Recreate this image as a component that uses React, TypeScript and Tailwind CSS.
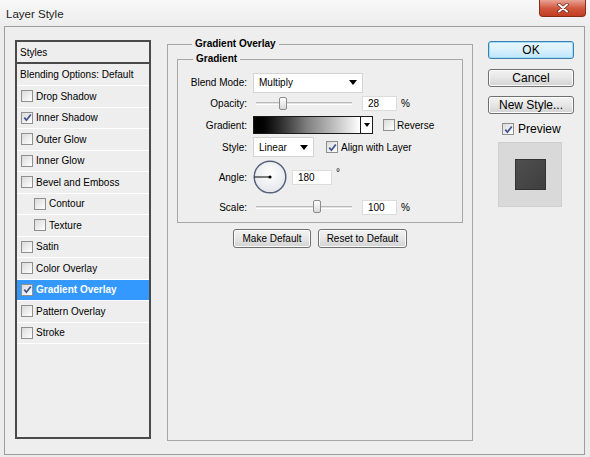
import React from 'react'

const STYLE_ROWS = [
  { label: 'Drop Shadow', checked: false, indent: false },
  { label: 'Inner Shadow', checked: true, indent: false },
  { label: 'Outer Glow', checked: false, indent: false },
  { label: 'Inner Glow', checked: false, indent: false },
  { label: 'Bevel and Emboss', checked: false, indent: false },
  { label: 'Contour', checked: false, indent: true },
  { label: 'Texture', checked: false, indent: true },
  { label: 'Satin', checked: false, indent: false },
  { label: 'Color Overlay', checked: false, indent: false },
  { label: 'Gradient Overlay', checked: true, indent: false, selected: true },
  { label: 'Pattern Overlay', checked: false, indent: false },
  { label: 'Stroke', checked: false, indent: false },
]

const Checkbox = ({ checked }: { checked?: boolean }) => (
  <span className="w-[12px] h-[12px] shrink-0 border border-[#8e8f8f] bg-linear-to-br from-[#dadada] to-white flex items-center justify-center">
    {checked && (
      <svg width="9" height="9" viewBox="0 0 9 9">
        <path d="M1.3 4.6 L3.4 7.2 L7.8 1.4" stroke="#3d528f" strokeWidth="1.7" fill="none" />
      </svg>
    )}
  </span>
)

const Arrow = () => (
  <svg width="8" height="5" viewBox="0 0 8 5">
    <path d="M0 0 H8 L4 5 Z" fill="#000" />
  </svg>
)

const Select = ({ value, width }: { value: string; width: string }) => (
  <div className={`${width} h-[20px] bg-white border border-[#d4d4d4] flex items-center justify-between pl-[5px] pr-[5px]`}>
    <span>{value}</span>
    <Arrow />
  </div>
)

const Slider = ({ thumb }: { thumb: string }) => (
  <div className="relative w-[96px] h-[14px] ml-[3px] flex items-center">
    <div className="w-full h-[3px] border-t border-[#b9b9b9] border-b border-b-white bg-[#e3e3e3]" />
    <div
      className={`absolute top-0 ${thumb} w-[8px] h-[13px] rounded-[2px] border border-[#8c8c8c] bg-linear-to-b from-white to-[#d9d9d9]`}
    />
  </div>
)

const NumberBox = ({ value, width }: { value: string; width: string }) => (
  <div className={`${width} h-[15px] bg-white border border-[#dcdcdc] flex items-center pl-[5px]`}>{value}</div>
)

const Button = ({ label, primary, className = '' }: { label: string; primary?: boolean; className?: string }) => (
  <div
    className={`flex items-center justify-center rounded-[3px] border ${
      primary
        ? 'border-[#3c7fb1] bg-linear-to-b from-[#eaf6fd] via-[#d9f0fc] to-[#bee6fd] shadow-[inset_0_0_0_1px_#9fdcf7]'
        : 'border-[#707070] bg-linear-to-b from-[#f3f3f3] via-[#e6e6e6] to-[#d2d2d2] shadow-[inset_0_0_0_1px_#fcfcfc]'
    } ${className}`}
  >
    {label}
  </div>
)

const Row = ({ label, height, children }: { label: string; height: string; children: React.ReactNode }) => (
  <div className={`${height} flex items-center`}>
    <div className="w-[69px] text-right">{label}</div>
    <div className="ml-[6px] flex items-center">{children}</div>
  </div>
)

export default function App() {
  return (
    <div className="w-[590px] h-[457px] overflow-hidden bg-[#ececec] font-['Liberation_Sans',Arial,sans-serif] text-[10px] text-black">
      {/* title bar */}
      <div className="h-[26px] flex items-start bg-linear-to-b from-[#f8f8f8] to-[#ededed]">
        <div className="pl-[6px] pt-[6px] text-[11.5px] text-[#1e1e1e]">Layer Style</div>
        <div className="ml-auto mr-[4px] w-[47px] h-[17px] rounded-b-[4px] border border-t-0 border-[#8d2b1b] bg-linear-to-b from-[#e8a395] via-[#d25840] to-[#c13c22] flex items-center justify-center">
          <svg width="12" height="10" viewBox="0 0 12 10">
            <path d="M2 1.5 L10 8.5 M10 1.5 L2 8.5" stroke="#6b2012" strokeWidth="3.4" strokeLinecap="round" />
            <path d="M2 1.5 L10 8.5 M10 1.5 L2 8.5" stroke="#fff" strokeWidth="2" strokeLinecap="round" />
          </svg>
        </div>
      </div>

      {/* dialog frame */}
      <div className="ml-[4px] w-[581px] h-[429px] border border-[#9d9d9d] bg-[#eeeeee] flex pl-[10px] pt-[13px]">
        {/* styles list */}
        <div className="w-[136px] h-[399px] border-2 border-[#4a4a4a] shrink-0">
          <div className="h-[22px] flex items-center pl-[3px] border-b-2 border-[#4a4a4a]">Styles</div>
          <div className="h-[22px] flex items-center pl-[3px] border-b border-white">Blending Options: Default</div>
          {STYLE_ROWS.map((r) => (
            <div
              key={r.label}
              className={`h-[21.5px] flex items-center gap-[3px] border-b border-white ${r.indent ? 'pl-[17px]' : 'pl-[4px]'} ${
                r.selected ? 'bg-[#3399ff] text-white font-bold' : ''
              }`}
            >
              <Checkbox checked={r.checked} />
              <span>{r.label}</span>
            </div>
          ))}
        </div>

        {/* main panel */}
        <fieldset className="ml-[16px] mt-[-2px] w-[306px] h-[403px] border border-[#a6a6a6] px-[9px] shrink-0">
          <legend className="ml-[15px] px-[3px] font-bold leading-[12px]">Gradient Overlay</legend>
          <fieldset className="mt-[3px] w-[286px] border border-[#a6a6a6] pb-[4px]">
            <legend className="ml-[15px] px-[3px] font-bold leading-[12px]">Gradient</legend>
            <div className="mt-[7px] flex flex-col">
              <Row label="Blend Mode:" height="h-[21px]">
                <Select value="Multiply" width="w-[110px]" />
              </Row>
              <Row label="Opacity:" height="h-[21px]">
                <Slider thumb="left-[23px]" />
                <div className="ml-[10px]">
                  <NumberBox value="28" width="w-[35px]" />
                </div>
                <span className="ml-[4px]">%</span>
              </Row>
              <Row label="Gradient:" height="h-[22px]">
                <div className="flex h-[18px] border border-[#1a1a1a]">
                  <div className="w-[106px] bg-linear-to-r from-black via-[#808080] to-white" />
                  <div className="w-[12px] bg-white border-l border-[#1a1a1a] flex items-center justify-center">
                    <svg width="6" height="4" viewBox="0 0 6 4">
                      <path d="M0 0 H6 L3 4 Z" fill="#000" />
                    </svg>
                  </div>
                </div>
                <div className="ml-[10px] flex items-center gap-[2px]">
                  <Checkbox />
                  <span>Reverse</span>
                </div>
              </Row>
              <Row label="Style:" height="h-[22px]">
                <Select value="Linear" width="w-[61px]" />
                <div className="ml-[12px] flex items-center gap-[3px]">
                  <Checkbox checked />
                  <span>Align with Layer</span>
                </div>
              </Row>
              <Row label="Angle:" height="h-[38px]">
                <svg width="34" height="34" viewBox="0 0 34 34">
                  <defs>
                    <radialGradient id="dial" cx="50%" cy="40%" r="60%">
                      <stop offset="0%" stopColor="#ffffff" />
                      <stop offset="100%" stopColor="#e4e6ea" />
                    </radialGradient>
                  </defs>
                  <circle cx="17" cy="17" r="15.8" fill="url(#dial)" stroke="#56617d" strokeWidth="1.5" />
                  <line x1="1.5" y1="17" x2="17" y2="17" stroke="#000" strokeWidth="1" />
                  <circle cx="17" cy="17" r="1.6" fill="#000" />
                </svg>
                <div className="ml-[5px]">
                  <NumberBox value="180" width="w-[40px]" />
                </div>
                <span className="ml-[4px] self-start mt-[8px] leading-[10px]">°</span>
              </Row>
              <Row label="Scale:" height="h-[22px]">
                <Slider thumb="left-[57px]" />
                <div className="ml-[10px]">
                  <NumberBox value="100" width="w-[35px]" />
                </div>
                <span className="ml-[4px]">%</span>
              </Row>
            </div>
          </fieldset>
          <div className="mt-[6px] flex justify-center gap-[7px]">
            <Button label="Make Default" className="w-[78px] h-[19px]" />
            <Button label="Reset to Default" className="w-[89px] h-[19px]" />
          </div>
        </fieldset>

        {/* right column */}
        <div className="ml-[15px] mt-[1px] w-[86px] flex flex-col text-[12px]">
          <Button label="OK" primary className="h-[18px]" />
          <Button label="Cancel" className="h-[18px] mt-[10px]" />
          <Button label="New Style..." className="h-[18px] mt-[9px]" />
          <div className="mt-[8px] h-[14px] pl-[14px] flex items-center gap-[4px]">
            <Checkbox checked />
            <span>Preview</span>
          </div>
          <div className="mt-[6px] ml-[10px] w-[64px] h-[65px] bg-[#d9d9d9] border border-[#cfcfcf] pl-[16px] pt-[16px]">
            <div className="w-[31px] h-[31px] bg-linear-to-br from-[#4f4f4f] to-[#3e3e3e] border border-[#333]" />
          </div>
        </div>
      </div>
    </div>
  )
}
